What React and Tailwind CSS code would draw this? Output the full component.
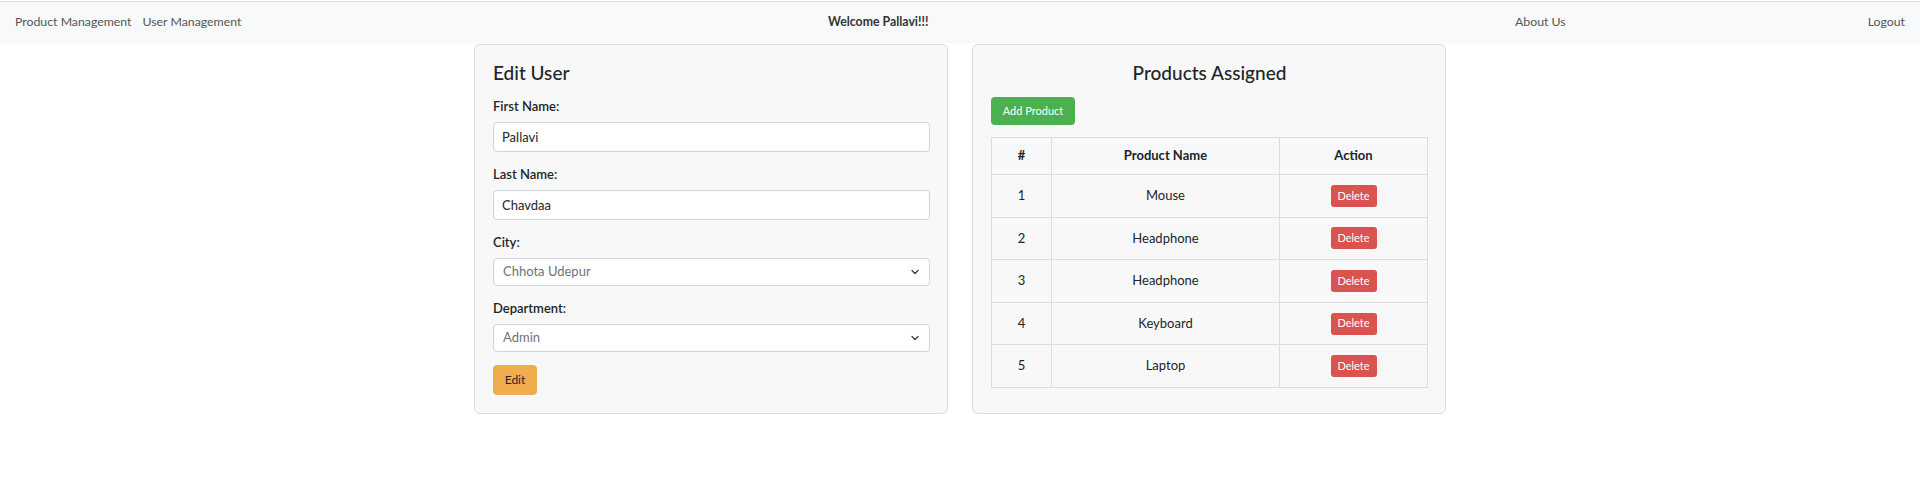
import React from 'react';

const products = [
  { id: 1, name: 'Mouse' },
  { id: 2, name: 'Headphone' },
  { id: 3, name: 'Headphone' },
  { id: 4, name: 'Keyboard' },
  { id: 5, name: 'Laptop' },
];

const Chevron = () => (
  <svg
    className="pointer-events-none absolute right-[10px] top-1/2 -translate-y-1/2"
    width="10"
    height="8"
    viewBox="0 0 16 16"
  >
    <path d="M2 5l6 6 6-6" fill="none" stroke="#343a40" strokeWidth="2.5" strokeLinecap="round" strokeLinejoin="round" />
  </svg>
);

const Field = ({ label, children }) => (
  <div className="mb-[13px]">
    <label className="mb-[6px] block font-semibold leading-[19px] text-[#212529]">{label}</label>
    {children}
  </div>
);

const TextInput = ({ value }) => (
  <input
    type="text"
    defaultValue={value}
    className="block h-[30px] w-full rounded-[4px] border border-[#ced4da] bg-white px-[8px] text-[#212529] outline-none"
  />
);

const Select = ({ value }) => (
  <div className="relative">
    <select
      defaultValue={value}
      className="block h-[28px] w-full appearance-none rounded-[4px] border border-[#ced4da] bg-white pl-[9px] text-[#6c757d] outline-none"
    >
      <option value={value}>{value}</option>
    </select>
    <Chevron />
  </div>
);

export default function App() {
  return (
    <div className="min-h-screen bg-white pt-px font-['Lato',sans-serif] text-[13px] text-[#212529]">
      {/* navbar */}
      <nav className="flex h-[42px] items-center justify-between border-t border-[#dee2e6] bg-[#f8f9fa] px-[15px] text-[12.3px] text-[#555]">
        <div className="flex gap-[11px]">
          <span>Product Management</span>
          <span>User Management</span>
        </div>
        <span className="font-bold text-[#333]">Welcome Pallavi!!!</span>
        <div className="flex gap-[302px]">
          <span>About Us</span>
          <span>Logout</span>
        </div>
      </nav>

      <div className="mt-px flex justify-center gap-[24px]">
        {/* edit user card */}
        <div className="w-[474px] rounded-[6px] border border-[#dcdcdc] bg-[#f8f8f8] pb-[18px] pl-[18px] pr-[17px] pt-[16px]">
          <h4 className="mb-[12px] text-[19px] font-medium leading-[24px] text-[#212529]">Edit User</h4>
          <Field label="First Name:">
            <TextInput value="Pallavi" />
          </Field>
          <Field label="Last Name:">
            <TextInput value="Chavdaa" />
          </Field>
          <Field label="City:">
            <Select value="Chhota Udepur" />
          </Field>
          <Field label="Department:">
            <Select value="Admin" />
          </Field>
          <button className="h-[30px] w-[44px] rounded-[4px] bg-[#f0ad4e] text-[12px] text-[#212529]">Edit</button>
        </div>

        {/* products card */}
        <div className="w-[474px] rounded-[6px] border border-[#dcdcdc] bg-[#f8f8f8] pl-[18px] pr-[17px] pt-[16px]">
          <h4 className="mb-[12px] text-center text-[19px] font-medium leading-[24px] text-[#212529]">
            Products Assigned
          </h4>
          <button className="h-[28px] w-[84px] rounded-[4px] bg-[#4caf50] text-[11px] text-white">Add Product</button>
          <table className="mt-[12px] w-full border-collapse text-center">
            <thead>
              <tr className="h-[37px] bg-[#f7f8fa]">
                <th className="w-[60px] border border-[#dddddd] font-bold">#</th>
                <th className="w-[228px] border border-[#dddddd] font-bold">Product Name</th>
                <th className="border border-[#dddddd] font-bold">Action</th>
              </tr>
            </thead>
            <tbody>
              {products.map((p) => (
                <tr key={p.id} className="h-[42.6px]">
                  <td className="border border-[#dddddd]">{p.id}</td>
                  <td className="border border-[#dddddd]">{p.name}</td>
                  <td className="border border-[#dddddd]">
                    <button className="h-[22px] w-[46px] rounded-[3px] bg-[#d9534f] text-[11px] text-white">Delete</button>
                  </td>
                </tr>
              ))}
            </tbody>
          </table>
        </div>
      </div>
    </div>
  );
}
